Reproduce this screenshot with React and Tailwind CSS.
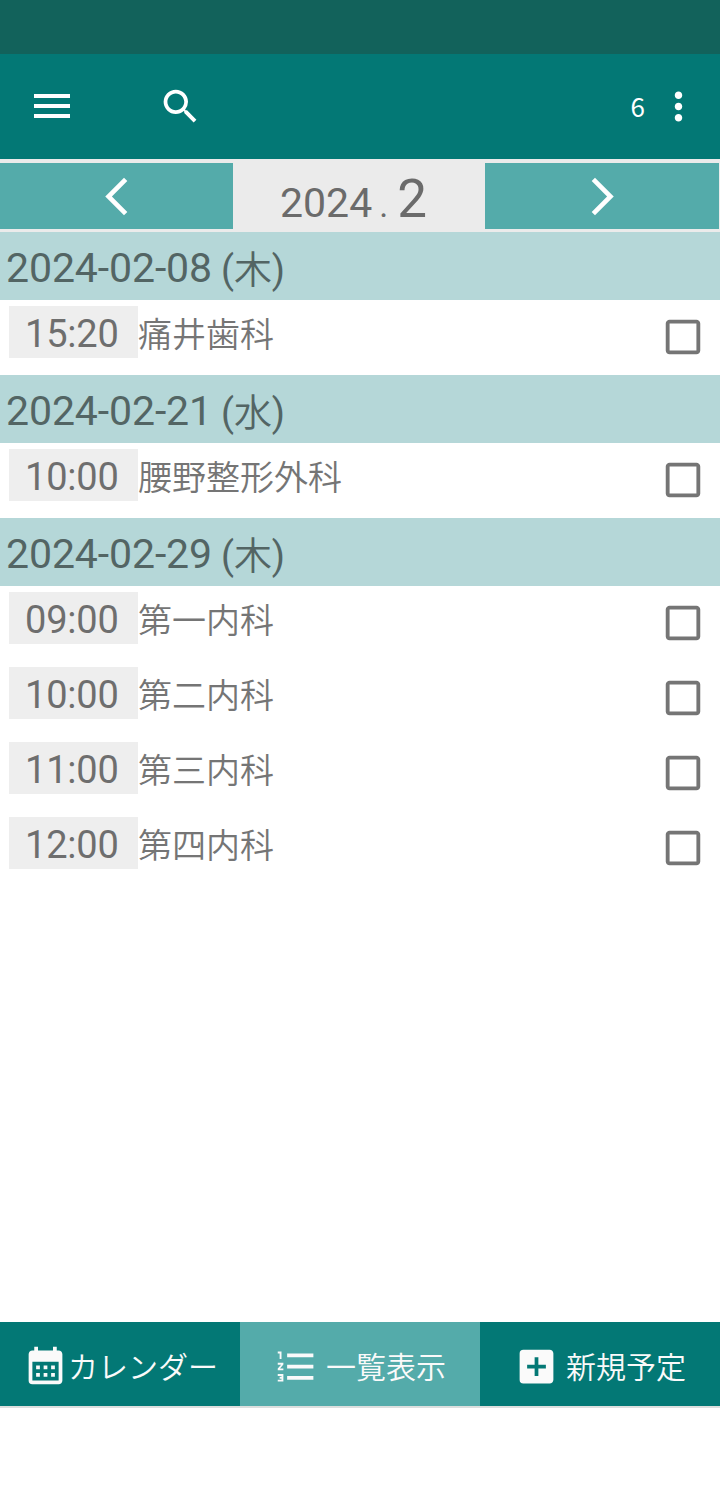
import {
  MdMenu,
  MdSearch,
  MdMoreVert,
  MdArrowBackIosNew,
  MdArrowForwardIos,
  MdCheckBoxOutlineBlank,
  MdCalendarMonth,
  MdFormatListNumbered,
  MdAddBox,
} from "react-icons/md";

const days = [
  {
    date: "2024-02-08",
    weekday: "木",
    items: [{ time: "15:20", title: "痛井歯科" }],
  },
  {
    date: "2024-02-21",
    weekday: "水",
    items: [{ time: "10:00", title: "腰野整形外科" }],
  },
  {
    date: "2024-02-29",
    weekday: "木",
    items: [
      { time: "09:00", title: "第一内科" },
      { time: "10:00", title: "第二内科" },
      { time: "11:00", title: "第三内科" },
      { time: "12:00", title: "第四内科" },
    ],
  },
];

function Header() {
  return (
    <header className="flex h-[105px] items-center bg-[#037875] text-white">
      <button className="mb-px ml-7">
        <MdMenu className="size-12" />
      </button>
      <button className="ml-[82px]">
        <MdSearch className="size-[45px]" />
      </button>
      <span className="mb-px ml-auto font-['Noto_Sans_CJK_JP',sans-serif] text-[26px] leading-[30px]">6</span>
      <button className="mr-[19px] ml-[11px]">
        <MdMoreVert className="size-[45px]" />
      </button>
    </header>
  );
}

function MonthBar() {
  return (
    <div className="flex h-[73px] bg-[#ebebeb] pt-1 pr-px pb-[3px]">
      <button className="flex w-[233px] items-center justify-center bg-[#54abaa] text-white">
        <MdArrowBackIosNew className="size-[45px]" />
      </button>
      <div className="flex flex-1 items-baseline pl-[47px] text-[41px] leading-[73px] text-[#6b6b6b]">
        <span>2024</span>
        <span className="ml-[7px] text-[34px]">.</span>
        <span className="ml-[9px] text-[53px]">2</span>
      </div>
      <button className="flex w-[234px] items-center justify-center bg-[#54abaa] text-white">
        <MdArrowForwardIos className="size-[45px]" />
      </button>
    </div>
  );
}

function Item({ time, title }) {
  return (
    <li className="flex h-[75px] pl-[9px]">
      <div className="mt-1.5 h-[52px] w-[129px] bg-[#eeeeee] pl-4 text-[38px] leading-[57px] tracking-[-0.2px] text-[#6e6e6e]">
        {time}
      </div>
      <div className="flex-1 text-[34px] leading-[70px] font-[350] text-[#757575]">{title}</div>
      <button className="mr-[14px] mb-px self-center text-[#757575]">
        <MdCheckBoxOutlineBlank className="size-[46px]" />
      </button>
    </li>
  );
}

const tabs = [
  { label: "カレンダー", icon: MdCalendarMonth, className: "bg-[#037875] pl-[23px]", iconClass: "mb-0.5", gap: "ml-0" },
  { label: "一覧表示", icon: MdFormatListNumbered, className: "bg-[#54abaa] pl-[34px]", iconClass: "mb-0", gap: "ml-[7px]" },
  { label: "新規予定", icon: MdAddBox, className: "bg-[#037875] pl-[34px]", iconClass: "mb-0", gap: "ml-[7px]" },
];

export default function App() {
  return (
    <div className="flex h-[1496px] w-[720px] flex-col overflow-hidden bg-white font-[Roboto,'Noto_Sans_CJK_JP',sans-serif]">
      {/* Status bar */}
      <div className="h-[54px] bg-[#12625b]" />
      <Header />
      <MonthBar />

      <main className="flex-1">
        {days.map((day) => (
          <section key={day.date}>
            <h2 className="flex h-[68px] gap-[9px] bg-[#b5d7d8] pl-1.5 text-[41px] leading-[72px] tracking-[-0.1px] text-[#536564]">
              <span>{day.date}</span>
              <span className="text-[38px] leading-[76px]">
                (<span className="font-[350]">{day.weekday}</span>)
              </span>
            </h2>
            <ul>
              {day.items.map((item) => (
                <Item key={item.time} {...item} />
              ))}
            </ul>
          </section>
        ))}
      </main>

      <nav className="grid h-[86px] grid-cols-3 border-b-2 border-[#dcdfde] text-[#fafafa]">
        {tabs.map((tab) => (
          <button key={tab.label} className={`flex items-center pt-1 ${tab.className}`}>
            <tab.icon className={`size-[45px] shrink-0 ${tab.iconClass}`} />
            <span className={`pt-1 text-[30px] leading-[44px] font-[350] whitespace-nowrap ${tab.gap}`}>{tab.label}</span>
          </button>
        ))}
      </nav>
      {/* System gesture area */}
      <div className="h-[88px]" />
    </div>
  );
}
